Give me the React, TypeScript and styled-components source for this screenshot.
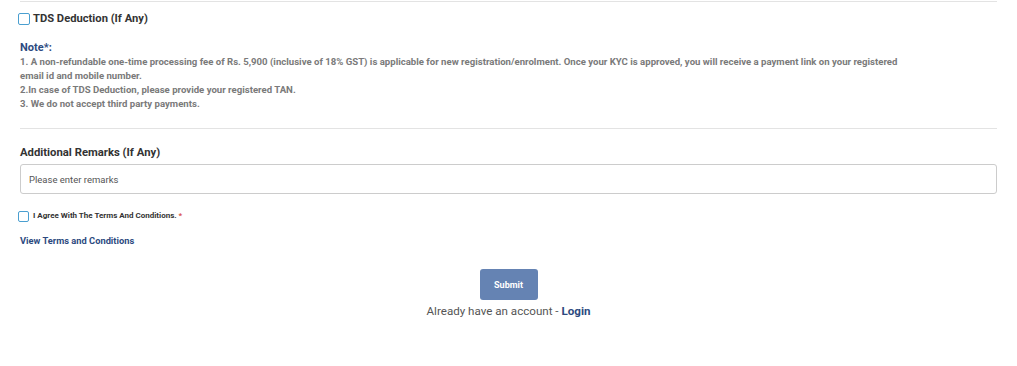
import styled, { createGlobalStyle } from 'styled-components'

const GlobalStyle = createGlobalStyle`
  body {
    margin: 0;
    background: #ffffff;
    font-family: Roboto, 'Liberation Sans', Arial, sans-serif;
  }
`

const colors = {
  navy: '#2c4a80',
  text: '#333333',
  muted: '#7a7a7a',
  line: '#e3e3e3',
  border: '#cccccc',
  checkbox: '#4a9fd0',
  button: '#6583b3',
  red: '#d9534f',
}

const notes = [
  '1. A non-refundable one-time processing fee of Rs. 5,900 (inclusive of 18% GST) is applicable for new registration/enrolment. Once your KYC is approved, you will receive a payment link on your registered email id and mobile number.',
  '2.In case of TDS Deduction, please provide your registered TAN.',
  '3. We do not accept third party payments.',
]

export default function App() {
  return (
    <>
      <GlobalStyle />
      <Page>
        <Divider />
        <CheckRow $gap={3}>
          <Box $size={12} />
          <TdsLabel>TDS Deduction (If Any)</TdsLabel>
        </CheckRow>

        <Note>
          <NoteTitle>Note*:</NoteTitle>
          {notes.map((n) => (
            <NoteLine key={n}>{n}</NoteLine>
          ))}
        </Note>

        <Divider $mt={17} />

        <FieldLabel>Additional Remarks (If Any)</FieldLabel>
        <Input placeholder="Please enter remarks" />

        <CheckRow $gap={4} $mt={15}>
          <Box $size={11} />
          <AgreeLabel>
            I Agree With The Terms And Conditions. <Star>*</Star>
          </AgreeLabel>
        </CheckRow>

        <TermsLink href="#">View Terms and Conditions</TermsLink>

        <Actions>
          <SubmitButton type="button">Submit</SubmitButton>
          <LoginText>
            Already have an account - <LoginLink href="#">Login</LoginLink>
          </LoginText>
        </Actions>
      </Page>
    </>
  )
}

const Page = styled.div`
  display: flex;
  flex-direction: column;
  padding: 1px 20px 40px;
  width: 977px;
`

const Divider = styled.div<{ $mt?: number }>`
  height: 1px;
  background: ${colors.line};
  margin-top: ${(p) => p.$mt ?? 0}px;
`

const CheckRow = styled.label<{ $gap: number; $mt?: number }>`
  display: flex;
  align-items: center;
  gap: ${(p) => p.$gap}px;
  margin-left: -2px;
  margin-top: ${(p) => p.$mt ?? 0}px;
`

const Box = styled.span<{ $size: number }>`
  display: inline-block;
  box-sizing: border-box;
  width: ${(p) => p.$size}px;
  height: ${(p) => p.$size}px;
  border: 1px solid ${colors.checkbox};
  border-radius: 2px;
  background: #fff;
`

const TdsLabel = styled.span`
  font-size: 11.2px;
  font-weight: 700;
  color: ${colors.text};
  line-height: 34px;
`

const Note = styled.div`
  display: flex;
  flex-direction: column;
  margin-top: 5px;
  max-width: 900px;
`

const NoteTitle = styled.div`
  font-size: 11px;
  font-weight: 700;
  color: ${colors.navy};
  line-height: 14px;
`

const NoteLine = styled.div`
  font-size: 9.6px;
  font-weight: 700;
  color: ${colors.muted};
  line-height: 14px;
`

const FieldLabel = styled.div`
  font-size: 11.3px;
  font-weight: 700;
  color: ${colors.text};
  margin-top: 15px;
  line-height: 18px;
`

const Input = styled.input`
  box-sizing: border-box;
  height: 30px;
  margin-top: 2px;
  padding: 0 8px;
  border: 1px solid ${colors.border};
  border-radius: 3px;
  font-family: inherit;
  font-size: 9.5px;
  color: ${colors.text};
  outline: none;

  &::placeholder {
    color: #555555;
  }
`

const AgreeLabel = styled.span`
  font-size: 8px;
  font-weight: 700;
  color: ${colors.text};
  line-height: 14px;
`

const Star = styled.span`
  color: ${colors.red};
`

const TermsLink = styled.a`
  margin-top: 11px;
  align-self: flex-start;
  font-size: 9.3px;
  font-weight: 700;
  color: ${colors.navy};
  text-decoration: none;
  line-height: 14px;
`

const Actions = styled.div`
  display: flex;
  flex-direction: column;
  align-items: center;
  margin-top: 21px;
  gap: 2px;
`

const SubmitButton = styled.button`
  width: 58px;
  height: 31px;
  border: none;
  border-radius: 3px;
  background: ${colors.button};
  color: #fff;
  font-family: inherit;
  font-size: 9px;
  font-weight: 700;
  cursor: pointer;
`

const LoginText = styled.div`
  font-size: 11.6px;
  color: #555555;
  line-height: 18px;
`

const LoginLink = styled.a`
  color: ${colors.navy};
  font-weight: 700;
  text-decoration: none;
`
